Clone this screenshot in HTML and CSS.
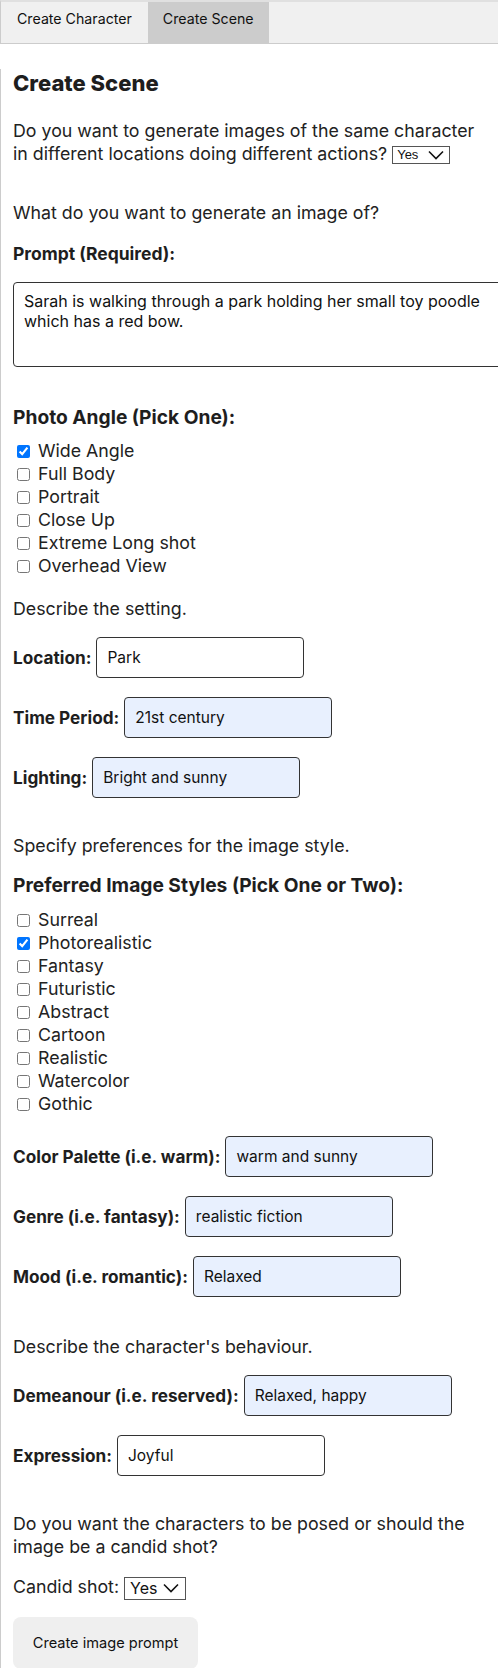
FILE: index.html
```html
<!DOCTYPE html>
<html>
<head>
<meta charset="utf-8">
<title>Create Scene</title>
<link rel="stylesheet" href="styles.css">
</head>
<body>
<div class="tab">
  <button class="tablink">Create Character</button>
  <button class="tablink active">Create Scene</button>
</div>
<div class="tabcontent">
  <h2 class="title">Create Scene</h2>
  <p class="q first-q">Do you want to generate images of the same character in different locations doing different actions? <select class="small-select"><option>Yes</option><option>No</option></select></p>

  <p class="q section">What do you want to generate an image of?</p>
  <div class="label-block">Prompt (Required):</div>
  <textarea class="prompt">Sarah is walking through a park holding her small toy poodle which has a red bow.</textarea>

  <div class="group-title">Photo Angle (Pick One):</div>
  <div class="checks">
    <label class="check"><input type="checkbox" checked> Wide Angle</label>
    <label class="check"><input type="checkbox"> Full Body</label>
    <label class="check"><input type="checkbox"> Portrait</label>
    <label class="check"><input type="checkbox"> Close Up</label>
    <label class="check"><input type="checkbox"> Extreme Long shot</label>
    <label class="check"><input type="checkbox"> Overhead View</label>
  </div>

  <p class="q after-checks">Describe the setting.</p>
  <div class="fields">
    <div class="field"><span class="flabel">Location:</span><input class="finput" type="text" value="Park"></div>
    <div class="field"><span class="flabel">Time Period:</span><input class="finput filled" type="text" value="21st century"></div>
    <div class="field"><span class="flabel">Lighting:</span><input class="finput filled" type="text" value="Bright and sunny"></div>
  </div>

  <p class="q section">Specify preferences for the image style.</p>
  <div class="group-title group-title-near">Preferred Image Styles (Pick One or Two):</div>
  <div class="checks checks-tight">
    <label class="check"><input type="checkbox"> Surreal</label>
    <label class="check"><input type="checkbox" checked> Photorealistic</label>
    <label class="check"><input type="checkbox"> Fantasy</label>
    <label class="check"><input type="checkbox"> Futuristic</label>
    <label class="check"><input type="checkbox"> Abstract</label>
    <label class="check"><input type="checkbox"> Cartoon</label>
    <label class="check"><input type="checkbox"> Realistic</label>
    <label class="check"><input type="checkbox"> Watercolor</label>
    <label class="check"><input type="checkbox"> Gothic</label>
  </div>
  <div class="fields fields-after-checks">
    <div class="field"><span class="flabel">Color Palette (i.e. warm):</span><input class="finput filled" type="text" value="warm and sunny"></div>
    <div class="field"><span class="flabel">Genre (i.e. fantasy):</span><input class="finput filled" type="text" value="realistic fiction"></div>
    <div class="field"><span class="flabel">Mood (i.e. romantic):</span><input class="finput filled" type="text" value="Relaxed"></div>
  </div>

  <p class="q section section-wide">Describe the character's behaviour.</p>
  <div class="fields">
    <div class="field"><span class="flabel">Demeanour (i.e. reserved):</span><input class="finput filled" type="text" value="Relaxed, happy"></div>
    <div class="field"><span class="flabel">Expression:</span><input class="finput" type="text" value="Joyful"></div>
  </div>

  <p class="q section">Do you want the characters to be posed or should the image be a candid shot?</p>
  <div class="candid">Candid shot: <select class="big-select"><option>Yes</option><option>No</option></select></div>
  <button class="submit">Create image prompt</button>
</div>
</body>
</html>
```
FILE: styles.css
```css
html, body {
  margin: 0;
  padding: 0;
  background: #fff;
}
body {
  font-family: Inter, Lato, sans-serif;
  color: #222;
  overflow: hidden;
}
.tab {
  display: flex;
  background: #f0f0f0;
  border-top: 2px solid #e0e0e0;
  border-bottom: 1px solid #ccc;
  border-left: 1px solid #ccc;
}
.tablink {
  font-family: Inter, sans-serif;
  font-size: 14.2px;
  color: #111;
  background: transparent;
  border: none;
  box-sizing: border-box;
  padding: 0 16px 8px;
  height: 41px;
  margin: 0;
}
.tablink.active {
  background: #ccc;
  padding: 0 15px 8px;
}
.tabcontent {
  border-left: 1px solid #ccc;
  padding: 0 0 0 12px;
  font-size: 17.8px;
  line-height: 23px;
}
.title {
  margin: 25px 0 0;
  font-size: 22px;
  line-height: 28px;
  font-weight: 800;
  color: #1e1e1e;
}
.q {
  margin: 0;
  max-width: 474px;
  font-size: 17.8px;
  line-height: 23px;
  color: #222;
}
.first-q {
  margin-top: 22px;
}
.section {
  margin-top: 36px;
}
.section-wide {
  margin-top: 38px;
}
.label-block {
  margin-top: 18px;
  font-weight: 700;
  font-size: 17.5px;
  color: #1e1e1e;
}
.prompt {
  display: block;
  margin-top: 17px;
  width: 510px;
  height: 85px;
  box-sizing: border-box;
  border: 1px solid #333;
  border-radius: 4px;
  padding: 9px 10px;
  font-family: Inter, sans-serif;
  font-size: 16px;
  line-height: 19.5px;
  color: #111;
  resize: none;
}
.group-title {
  margin-top: 39px;
  font-weight: 700;
  font-size: 19.2px;
  color: #1e1e1e;
}
.group-title-near {
  margin-top: 17px;
}
.checks {
  margin-top: 10px;
  display: flex;
  flex-direction: column;
}
.checks-tight {
  margin-top: 11px;
}
.check {
  display: block;
  height: 23px;
  line-height: 23px;
}
.check input {
  margin: 0 3px 0 4px;
  vertical-align: -1px;
}
.after-checks {
  margin-top: 20px;
}
.fields {
  margin-top: 17px;
  display: flex;
  flex-direction: column;
  gap: 19px;
}
.fields-after-checks {
  margin-top: 21px;
}
.field {
  display: flex;
  align-items: center;
  gap: 5px;
  height: 41px;
}
.flabel {
  font-weight: 700;
  font-size: 17.2px;
  color: #1e1e1e;
}
.finput {
  width: 208px;
  height: 41px;
  box-sizing: border-box;
  border: 1px solid #333;
  border-radius: 4px;
  padding: 0 10px;
  font-family: Inter, sans-serif;
  font-size: 15.5px;
  color: #111;
  background: #fff;
}
.finput.filled {
  background: #e8f0fe;
}
.small-select {
  appearance: none;
  -webkit-appearance: none;
  font-family: Arial, "Liberation Sans", sans-serif;
  font-size: 13px;
  line-height: 16px;
  height: 18px;
  width: 58px;
  padding: 0 0 0 4px;
  border: 1px solid #555;
  border-radius: 0;
  background: #fff url("data:image/svg+xml;utf8,<svg xmlns='http://www.w3.org/2000/svg' width='16' height='10' viewBox='0 0 16 10'><path d='M1 1.5 L8 8.5 L15 1.5' fill='none' stroke='%23111' stroke-width='1.6'/></svg>") no-repeat right 5px center;
  color: #111;
  vertical-align: 1px;
}
.candid {
  margin-top: 17px;
  height: 23px;
  line-height: 23px;
}
.big-select {
  appearance: none;
  -webkit-appearance: none;
  font-family: Inter, sans-serif;
  font-size: 16px;
  height: 23px;
  width: 62px;
  padding: 0 0 0 5px;
  border: 1px solid #555;
  border-radius: 0;
  background: #fff url("data:image/svg+xml;utf8,<svg xmlns='http://www.w3.org/2000/svg' width='16' height='10' viewBox='0 0 16 10'><path d='M1 1.5 L8 8.5 L15 1.5' fill='none' stroke='%23111' stroke-width='1.6'/></svg>") no-repeat right 6px center;
  color: #111;
  vertical-align: -1px;
}
.submit {
  display: block;
  margin-top: 19px;
  width: 185px;
  height: 52px;
  border: none;
  border-radius: 8px;
  background: #efefef;
  font-family: Inter, sans-serif;
  font-size: 14.6px;
  color: #111;
}
```
